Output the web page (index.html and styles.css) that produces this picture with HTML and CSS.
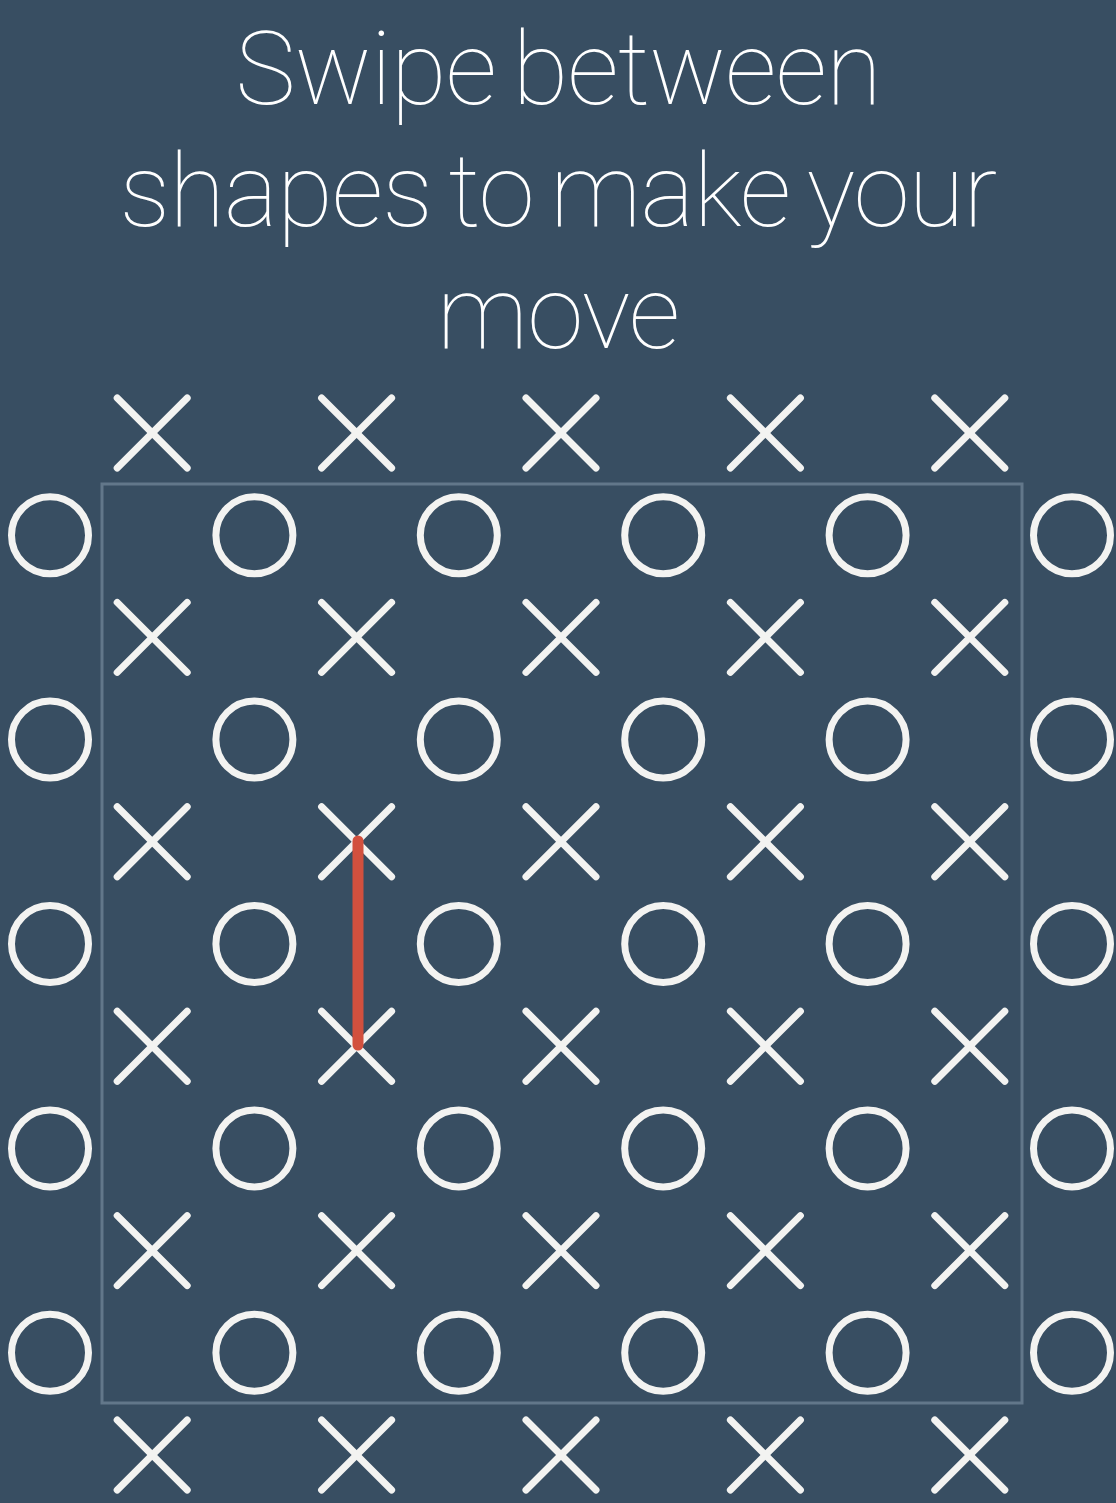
FILE: index.html
```html
<!DOCTYPE html>
<html lang="en">
<head>
<meta charset="utf-8">
<title>Swipe between shapes</title>
<link rel="stylesheet" href="styles.css">
</head>
<body>
<main class="screen">
  <h1 class="title">Swipe between<br>shapes to make your<br>move</h1>
  <svg class="board" viewBox="0 380 1116 1123" width="1116" height="1123" xmlns="http://www.w3.org/2000/svg">
    <defs>
      <g id="ex">
        <line x1="-35" y1="-35" x2="35" y2="35"/>
        <line x1="-35" y1="35" x2="35" y2="-35"/>
      </g>
      <circle id="oh" cx="0" cy="0" r="38.5"/>
    </defs>
    <rect class="frame" x="102" y="484" width="920" height="919"/>
    <g class="marks" id="marks"></g>
    <line class="move" x1="358" y1="841" x2="358" y2="1045"/>
  </svg>
</main>
<script src="app.js"></script>
</body>
</html>
```

FILE: styles.css
```css
html, body {
  margin: 0;
  padding: 0;
  background: #384e62;
}
body {
  width: 1116px;
  height: 1503px;
  overflow: hidden;
}
.screen {
  display: flex;
  flex-direction: column;
  align-items: center;
}
.title {
  margin: 0;
  width: 1116px;
  height: 380px;
  padding-top: 8px;
  box-sizing: border-box;
  font-family: Roboto, "Open Sans", sans-serif;
  font-weight: 100;
  font-size: 102px;
  line-height: 122px;
  letter-spacing: -1px;
  word-spacing: -7px;
  text-align: center;
  color: #ffffff;
}
.board {
  display: block;
}
.frame {
  fill: none;
  stroke: #62778a;
  stroke-width: 3;
}
.marks {
  fill: none;
  stroke: #f3f3f1;
  stroke-width: 7;
  stroke-linecap: round;
}
.move {
  stroke: #d2503e;
  stroke-width: 11;
  stroke-linecap: round;
}
```

FILE: app.js
```js
(function () {
  var NS = "http://www.w3.org/2000/svg";
  var g = document.getElementById("marks");
  var s = 204.4;
  function use(id, x, y) {
    var u = document.createElementNS(NS, "use");
    u.setAttribute("href", "#" + id);
    u.setAttribute("transform", "translate(" + x.toFixed(1) + " " + y.toFixed(1) + ")");
    g.appendChild(u);
  }
  for (var r = 0; r < 6; r++) {
    for (var c = 0; c < 5; c++) {
      use("ex", 152.2 + c * s, 433 + r * s);
    }
  }
  for (var r2 = 0; r2 < 5; r2++) {
    for (var c2 = 0; c2 < 6; c2++) {
      use("oh", 50 + c2 * s, 535.2 + r2 * s);
    }
  }
})();
```
